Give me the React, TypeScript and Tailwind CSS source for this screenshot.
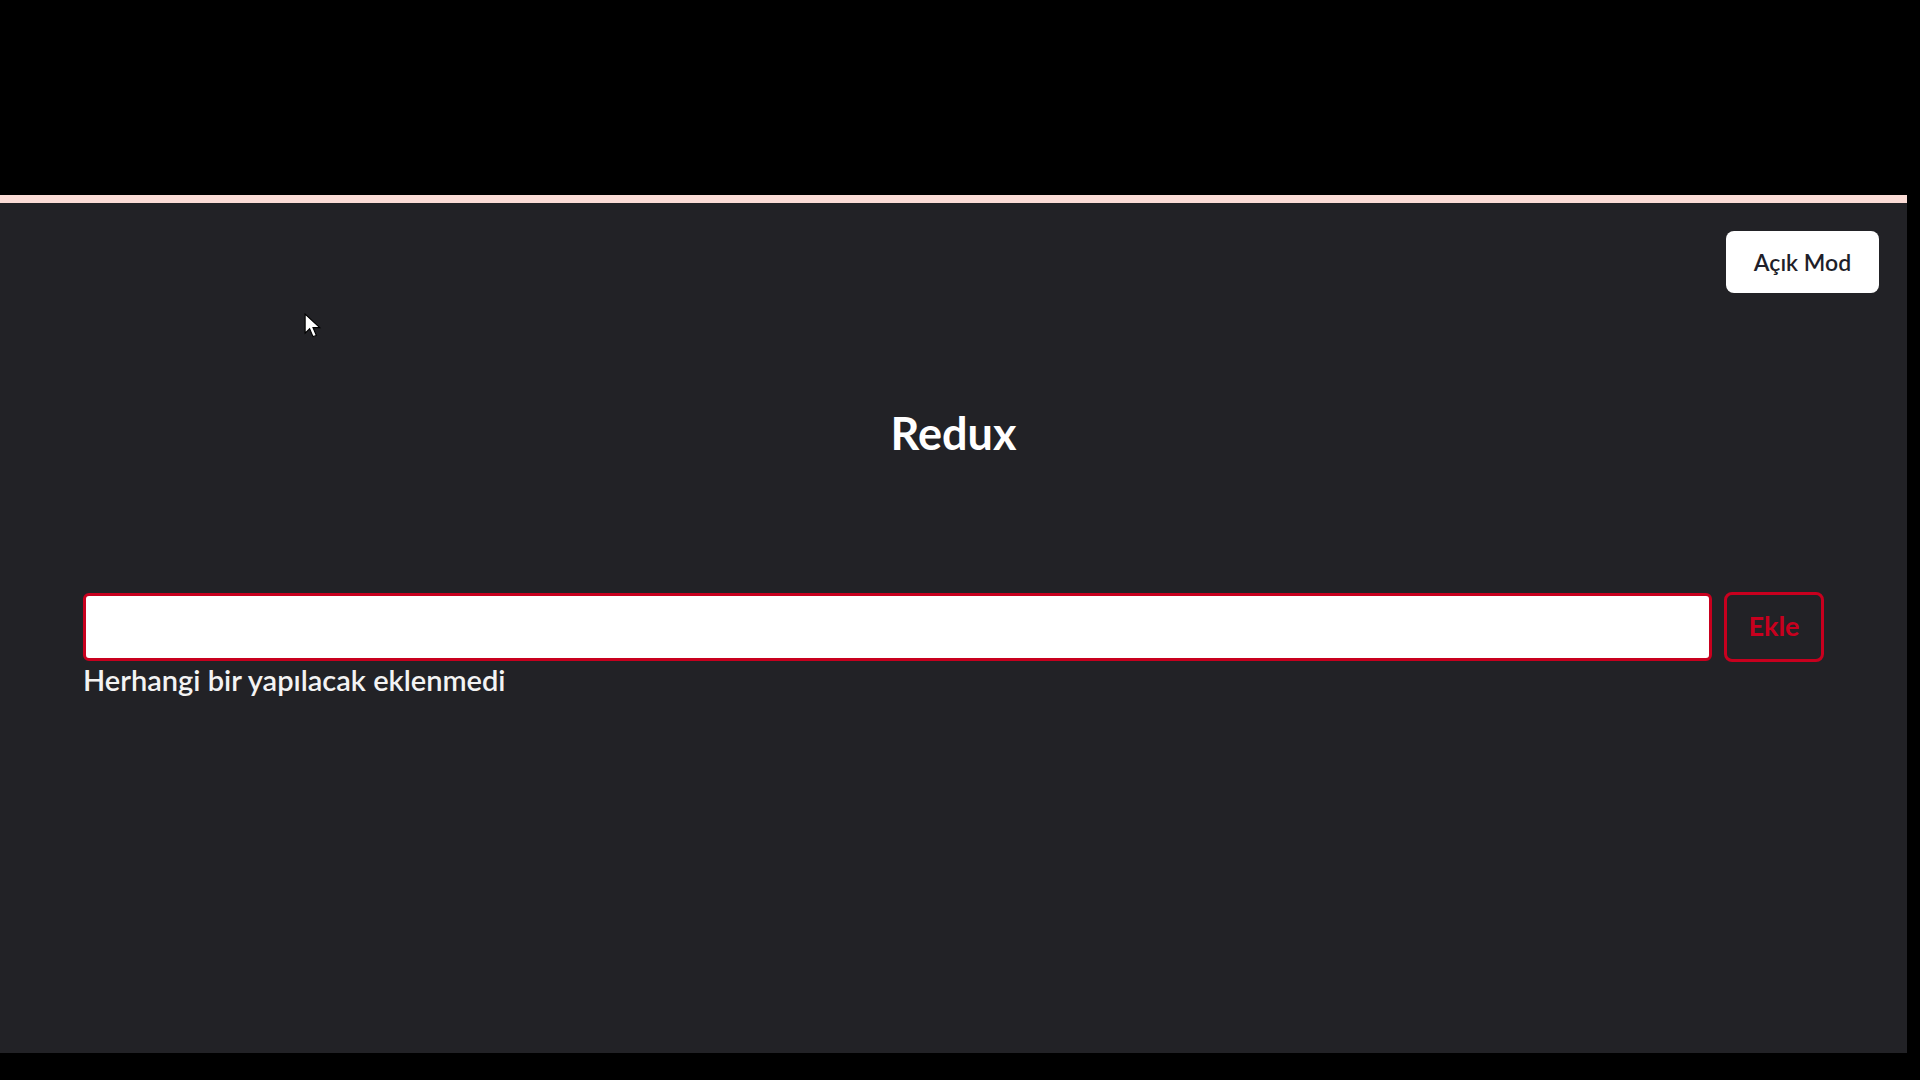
import { useState } from "react";

export default function App() {
  const [text, setText] = useState("");

  return (
    <div className="flex h-screen w-full flex-col bg-black font-['Lato',_'Noto_Sans',_sans-serif]">
      <div className="h-[195px] shrink-0" />
      <div className="relative flex h-[858px] w-[1907px] flex-col border-t-[8px] border-[#fbdcd6] bg-[#222226]">
        <div className="flex justify-end pr-[28px] pt-[28px]">
          <button className="h-[62px] w-[153px] rounded-lg bg-white text-[23px] font-semibold text-[#1f1f2a]">
            Açık Mod
          </button>
        </div>

        <h1 className="mt-[107px] text-center text-[45px] font-bold text-white">Redux</h1>

        <div className="mt-[124px] flex items-center gap-[12px] pl-[83px]">
          <input
            value={text}
            onChange={(e) => setText(e.target.value)}
            className="h-[68px] w-[1629px] rounded-md border-[3px] border-[#c8001e] bg-white px-4 text-2xl outline-none"
          />
          <button className="h-[70px] w-[100px] rounded-lg border-[3px] border-[#c8001e] text-[27px] font-bold text-[#c8001e]">
            Ekle
          </button>
        </div>
        <p className="pl-[83px] text-[29px] font-semibold leading-[36px] text-[#f3f3f3]">
          Herhangi bir yapılacak eklenmedi
        </p>

        <svg
          className="absolute left-[304px] top-[110px]"
          width="18"
          height="27"
          viewBox="0 0 16 24"
        >
          <path d="M1 1 L1 18 L5 14 L8 21 L11 20 L8 13 L14 13 Z" fill="#fff" stroke="#000" strokeWidth="1" />
        </svg>
      </div>
    </div>
  );
}
